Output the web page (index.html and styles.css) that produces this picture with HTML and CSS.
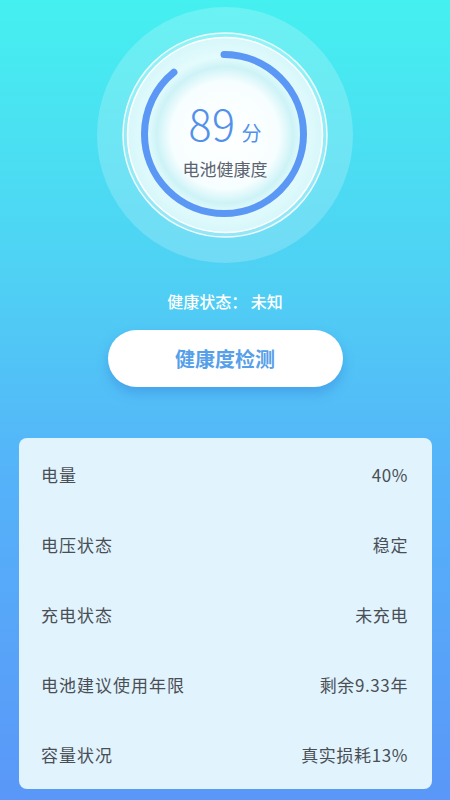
FILE: index.html
```html
<!DOCTYPE html>
<html lang="zh-CN">
<head>
  <meta charset="UTF-8" />
  <meta name="viewport" content="width=device-width, initial-scale=1.0" />
  <title>电池健康度</title>
  <link rel="stylesheet" href="styles.css">
</head>
<body>
  <div class="page">
    <div class="gauge">
      <svg class="gauge-svg" viewBox="0 0 256 256" width="256" height="256">
        <defs>
          <radialGradient id="core" cx="50%" cy="50%" r="50%">
            <stop offset="0%" stop-color="#ffffff" />
            <stop offset="55%" stop-color="#f7feff" />
            <stop offset="70%" stop-color="#cdf3f7" />
            <stop offset="80%" stop-color="#e4fbfc" />
            <stop offset="100%" stop-color="#d6f7fa" />
          </radialGradient>
        </defs>
        <circle cx="128" cy="128" r="128" fill="#ffffff" fill-opacity="0.2" />
        <circle cx="128" cy="128" r="102" fill="#ffffff" fill-opacity="0.25" stroke="#ffffff" stroke-opacity="0.85" stroke-width="1.5" />
        <circle cx="128" cy="128" r="97.5" fill="url(#core)" stroke="#ffffff" stroke-width="1.5" />
        <!-- 89% of the ring, starting at the top -->
        <circle class="arc" cx="127" cy="127" r="79.5" fill="none" stroke="#5b97f4" stroke-width="7"
                stroke-linecap="round" stroke-dasharray="444.6 500" transform="rotate(-90 127 127)" />
      </svg>
      <div class="gauge-text">
        <div class="score"><span class="score-num">89</span><span class="score-unit">分</span></div>
        <div class="score-label">电池健康度</div>
      </div>
    </div>

    <div class="status">健康状态： 未知</div>

    <button class="check-btn">健康度检测</button>

    <div class="info-card">
      <div class="info-row"><span>电量</span><span>40%</span></div>
      <div class="info-row"><span>电压状态</span><span>稳定</span></div>
      <div class="info-row"><span>充电状态</span><span>未充电</span></div>
      <div class="info-row"><span>电池建议使用年限</span><span>剩余9.33年</span></div>
      <div class="info-row"><span>容量状况</span><span>真实损耗13%</span></div>
    </div>
  </div>
</body>
</html>
```

FILE: styles.css
```css
body {
  margin: 0;
  font-family: "Noto Sans CJK SC", "Noto Sans", sans-serif;
  background: linear-gradient(180deg, #45f0f0 0%, #4fd0f4 35%, #55b2f9 60%, #5a97f8 100%);
  min-height: 800px;
  overflow: hidden;
}
.page {
  display: flex;
  flex-direction: column;
  align-items: center;
  height: 800px;
}
.gauge {
  position: relative;
  width: 256px;
  height: 256px;
  margin-top: 7px;
}
.gauge-svg {
  display: block;
}
.gauge-text {
  position: absolute;
  inset: 0;
  display: flex;
  flex-direction: column;
  align-items: center;
  padding-top: 91px;
}
.score {
  display: flex;
  align-items: baseline;
  height: 48px;
  line-height: 48px;
  color: #5291ea;
}
.score-num {
  font-size: 43px;
  font-weight: 300;
  letter-spacing: 0.5px;
}
.score-unit {
  font-size: 20px;
  margin-left: 6px;
}
.score-label {
  margin-top: 12px;
  font-size: 17px;
  line-height: 22px;
  color: #5d6470;
}
.status {
  margin-top: 28px;
  font-size: 16px;
  line-height: 20px;
  font-weight: 500;
  color: #ffffff;
}
.check-btn {
  margin-top: 19px;
  width: 235px;
  height: 57px;
  border: none;
  border-radius: 29px;
  background: #ffffff;
  box-shadow: 0 6px 12px rgba(45, 110, 210, 0.35);
  font-family: inherit;
  font-size: 20px;
  font-weight: 700;
  color: #56a0ea;
  padding: 0;
}
.info-card {
  margin-top: 51px;
  width: 413px;
  margin-left: 1px;
  background: #e1f3fd;
  border-radius: 8px;
  box-sizing: border-box;
  padding: 1px 24px 0 22px;
}
.info-row {
  display: flex;
  justify-content: space-between;
  align-items: center;
  height: 70px;
  font-size: 17px;
  letter-spacing: 1px;
  color: #4a4f55;
}
.info-row span:last-child {
  letter-spacing: 0.6px;
}
```
